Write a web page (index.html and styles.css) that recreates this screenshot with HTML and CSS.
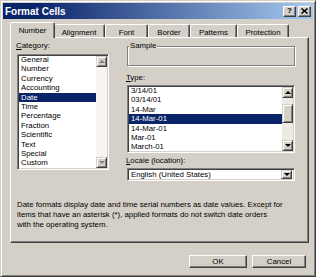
FILE: index.html
```html
<!DOCTYPE html>
<html>
<head>
<meta charset="utf-8">
<link rel="stylesheet" href="styles.css">
</head>
<body>
<div class="window">
  <div class="titlebar">
    <span class="title">Format Cells</span>
    <div class="cbtns">
      <span class="cbtn q">?</span>
      <span class="cbtn"><svg width="7" height="6" viewBox="0 0 7 6"><path d="M0.5 0.5 L6.5 5.5 M6.5 0.5 L0.5 5.5" stroke="#000" stroke-width="1.5" fill="none"/></svg></span>
    </div>
  </div>
  <div class="tabs">
    <div class="tab t-number active">Number</div>
    <div class="tab t-align">Alignment</div>
    <div class="tab t-font">Font</div>
    <div class="tab t-border">Border</div>
    <div class="tab t-patterns">Patterns</div>
    <div class="tab t-protection">Protection</div>
  </div>
  <div class="panel">
    <div class="cols">
      <div class="col-left">
        <div class="label"><u>C</u>ategory:</div>
        <div class="listbox cat">
          <div class="items">
            <div class="row">General</div>
            <div class="row">Number</div>
            <div class="row">Currency</div>
            <div class="row">Accounting</div>
            <div class="row sel">Date</div>
            <div class="row">Time</div>
            <div class="row">Percentage</div>
            <div class="row">Fraction</div>
            <div class="row">Scientific</div>
            <div class="row">Text</div>
            <div class="row">Special</div>
            <div class="row">Custom</div>
          </div>
          <div class="sbar">
            <div class="sbtn"><span class="tri up dis"></span></div>
            <div class="track light"></div>
            <div class="sbtn"><span class="tri down dis"></span></div>
          </div>
        </div>
      </div>
      <div class="col-right">
        <div class="sample"><span class="legend">Sample</span></div>
        <div class="label type-label"><u>T</u>ype:</div>
        <div class="listbox typ">
          <div class="items">
            <div class="row">3/14/01</div>
            <div class="row">03/14/01</div>
            <div class="row">14-Mar</div>
            <div class="row sel">14-Mar-01</div>
            <div class="row">14-Mar-01</div>
            <div class="row">Mar-01</div>
            <div class="row">March-01</div>
          </div>
          <div class="sbar">
            <div class="sbtn"><span class="tri up"></span></div>
            <div class="track short"></div>
            <div class="thumb"></div>
            <div class="track"></div>
            <div class="sbtn"><span class="tri down"></span></div>
          </div>
        </div>
        <div class="label locale-label"><u>L</u>ocale (location):</div>
        <div class="combo">
          <span class="combo-text">English (United States)</span>
          <div class="sbtn"><span class="tri down"></span></div>
        </div>
      </div>
    </div>
    <p class="desc">Date formats display date and time serial numbers as date values. Except for<br>items that have an asterisk (*), applied formats do not switch date orders<br>with the operating system.</p>
  </div>
  <div class="buttons">
    <div class="btn ok">OK</div>
    <div class="btn cancel">Cancel</div>
  </div>
</div>
</body>
</html>
```
FILE: styles.css
```css
* { box-sizing: border-box; }
body {
  margin: 0;
  background: #fff;
  font-family: "Liberation Sans", Arial, sans-serif;
  font-size: 7.8px;
  color: #000;
}
.window {
  width: 316px;
  height: 277px;
  background: #D4D0C8;
  border: 1px solid;
  border-color: #D4D0C8 #404040 #404040 #D4D0C8;
  box-shadow: inset 1px 1px #fff, inset -1px -1px #808080;
  padding: 2px;
  display: flex;
  flex-direction: column;
}
.titlebar {
  height: 16px;
  background: linear-gradient(to right, #0A246A 10%, #A6CAF0);
  display: flex;
  align-items: center;
  justify-content: space-between;
  padding: 0 2px 0 2px;
  flex: none;
}
.title {
  color: #fff;
  font-weight: bold;
  font-size: 10px;
}
.cbtns { display: flex; gap: 2px; }
.cbtn {
  width: 13px;
  height: 11px;
  background: #D4D0C8;
  border: 1px solid;
  border-color: #fff #404040 #404040 #fff;
  box-shadow: inset -1px -1px #808080;
  display: flex;
  align-items: center;
  justify-content: center;
  font-weight: bold;
  font-size: 8px;
  line-height: 1;
}
.tabs {
  flex: none;
  height: 15px;
  margin-top: 3px;
  padding-left: 9px;
  display: flex;
  align-items: flex-end;
}
.tab {
  height: 13px;
  border: 1px solid;
  border-bottom: none;
  border-color: #fff #404040 transparent #fff;
  box-shadow: inset -1px 0 #808080;
  border-radius: 2px 2px 0 0;
  display: flex;
  align-items: center;
  justify-content: center;
  padding-top: 2px;
  line-height: 9px;
}
.t-number { width: 41px; }
.t-align { width: 52px; }
.t-font { width: 43px; }
.t-border { width: 42px; }
.t-patterns { width: 47px; }
.t-protection { width: 52px; }
.tab.active {
  width: 45px;
  height: 16px;
  margin: 0 -2px -1px;
  position: relative;
  z-index: 1;
  background: #D4D0C8;
  padding-top: 0;
}
.panel {
  flex: none;
  margin-left: 7px;
  width: 299px;
  height: 206px;
  border: 1px solid;
  border-color: #fff #404040 #404040 #fff;
  box-shadow: inset -1px -1px #808080;
  padding: 3px 6px 0 6px;
}
.cols { display: flex; gap: 18px; }
.col-left { width: 92px; display: flex; flex-direction: column; }
.col-right { width: 168px; display: flex; flex-direction: column; }
.label { line-height: 10px; height: 10px; margin-left: -1px; }
.listbox {
  background: #fff;
  border: 1px solid;
  border-color: #808080 #fff #fff #808080;
  box-shadow: inset 1px 1px #404040, inset -1px -1px #D4D0C8;
  padding: 1px;
  display: flex;
}
.listbox.cat { height: 116px; margin-top: 3px; }
.listbox.typ { height: 68px; margin-top: 2px; }
.items { flex: 1; overflow: hidden; margin: -1px 0 -1px 0; }
.row { height: 9.4px; line-height: 9.4px; padding-left: 2px; white-space: nowrap; }
.row.sel { background: #0A246A; color: #fff; }
.sbar { width: 11px; display: flex; flex-direction: column; }
.sbtn {
  flex: none;
  width: 11px;
  height: 11px;
  background: #D4D0C8;
  border: 1px solid;
  border-color: #D4D0C8 #404040 #404040 #D4D0C8;
  box-shadow: inset 1px 1px #fff, inset -1px -1px #808080;
  display: flex;
  align-items: center;
  justify-content: center;
}
.track { flex: 1; background: #ECEAE5; }
.track.light { background: #F6F5F2; }
.track.short { flex: none; height: 6px; }
.thumb {
  flex: none;
  height: 19px;
  background: #D4D0C8;
  border: 1px solid;
  border-color: #D4D0C8 #404040 #404040 #D4D0C8;
  box-shadow: inset 1px 1px #fff, inset -1px -1px #808080;
}
.tri { width: 0; height: 0; border-left: 3px solid transparent; border-right: 3px solid transparent; }
.tri.up { border-bottom: 3px solid #000; }
.tri.down { border-top: 3px solid #000; }
.tri.up.dis { border-bottom-color: #808080; }
.tri.down.dis { border-top-color: #808080; }
.sample {
  position: relative;
  margin-top: 5px;
  height: 20px;
  border: 1px solid #808080;
  box-shadow: inset 1px 1px #fff, 1px 1px #fff;
}
.legend {
  position: absolute;
  top: -6px;
  left: 1px;
  padding: 0 1px;
  background: #D4D0C8;
  line-height: 10px;
}
.type-label { margin-top: 7px; }
.locale-label { margin-top: 3px; }
.combo {
  margin-top: 2px;
  height: 13px;
  background: #fff;
  border: 1px solid;
  border-color: #808080 #fff #fff #808080;
  box-shadow: inset 1px 1px #404040, inset -1px -1px #D4D0C8;
  padding: 1px 2px 1px 2px;
  display: flex;
  align-items: center;
  justify-content: space-between;
}
.combo .sbtn { height: 9px; }
.combo-text { padding-left: 1px; }
.desc { margin: 19px 0 0; line-height: 10px; white-space: nowrap; }
.buttons {
  margin-top: 12px;
  display: flex;
  justify-content: flex-end;
  gap: 5px;
  padding-right: 7px;
}
.btn {
  height: 13px;
  border: 1px solid;
  border-color: #fff #404040 #404040 #fff;
  box-shadow: inset -1px -1px #808080;
  display: flex;
  align-items: center;
  justify-content: center;
}
.btn.ok { width: 58px; }
.btn.cancel { width: 54px; }
```
